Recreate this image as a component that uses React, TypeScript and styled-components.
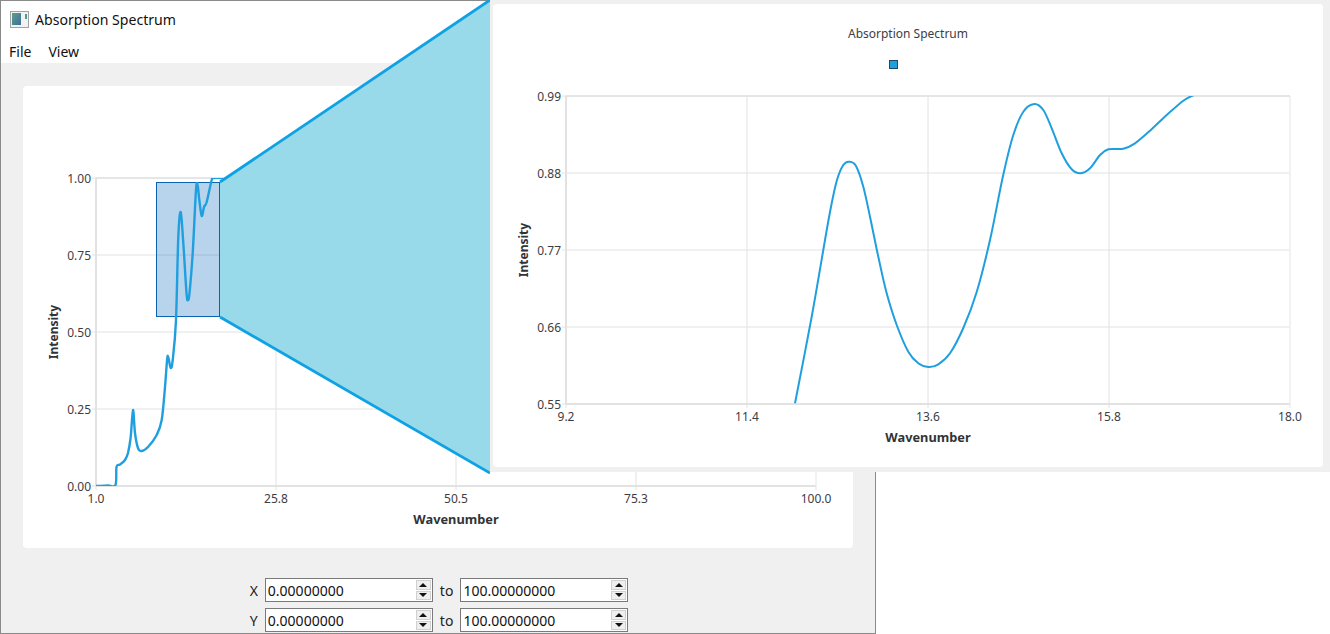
import React from 'react';
import styled, { createGlobalStyle } from 'styled-components';

const GlobalStyle = createGlobalStyle`
    html, body { margin: 0; padding: 0; background: #fff; overflow: hidden; }
    body { font-family: "Noto Sans", "Open Sans", sans-serif; }
`;

const Page = styled.div`
    position: relative;
    width: 1330px;
    height: 634px;
    overflow: hidden;
`;

const Win = styled.div`
    box-sizing: border-box;
    width: 876px;
    height: 634px;
    display: flex;
    flex-direction: column;
    border: 1px solid #8a8a8a;
    background: #f0f0f0;
`;

const TitleBar = styled.div`
    height: 36px;
    display: flex;
    align-items: center;
    gap: 6px;
    padding: 0 0 0 9px;
    background: #fff;
    font-size: 14.1px;
    color: #111;
`;

const MenuBar = styled.div`
    height: 26px;
    display: flex;
    gap: 17px;
    padding-left: 8px;
    background: #fff;
    font-size: 14px;
    line-height: 30px;
    color: #111;
`;

const Body = styled.div`
    flex: 1;
    display: flex;
    flex-direction: column;
    padding: 23px 22px 0;
`;

const Card = styled.div<{ $w: number; $h: number }>`
    width: ${p => p.$w}px;
    height: ${p => p.$h}px;
    flex: none;
    background: #fff;
    border-radius: 4px;

    svg { display: block; }
`;

const Controls = styled.div`
    margin-top: 30px;
    padding-left: 2px;
    display: grid;
    grid-template-columns: auto 168px auto 168px;
    grid-auto-rows: 24px;
    row-gap: 6px;
    column-gap: 7px;
    justify-content: center;
    align-items: center;
    font-size: 14px;
    color: #222;
`;

const SpinBox = styled.div`
    box-sizing: border-box;
    height: 24px;
    display: flex;
    align-items: center;
    justify-content: space-between;
    padding: 0 1px 0 2px;
    background: #fff;
    border: 1px solid #7a7a7a;
    font-size: 14px;
    color: #111;
`;

const SpinButtons = styled.div`
    width: 15px;
    height: 20px;
    display: flex;
    flex-direction: column;
    gap: 1px;
`;

const SpinButton = styled.div<{ $down?: boolean }>`
    flex: 1;
    display: flex;
    align-items: center;
    justify-content: center;
    background: #efefef;
    border: 1px solid #d0d0d0;

    &::before {
        content: '';
        border-left: 4px solid transparent;
        border-right: 4px solid transparent;
        ${p => p.$down ? 'border-top: 4px solid #111;' : 'border-bottom: 4px solid #111;'}
    }
`;

const ZoomWindow = styled.div`
    position: absolute;
    left: 490px;
    top: 0;
    width: 840px;
    height: 472px;
    box-sizing: border-box;
    padding: 4px 7px 5px 3px;
    background: #f0f0f0;
`;

const ZoomBand = styled.svg`
    position: absolute;
    left: 0;
    top: 0;
`;

type Pt = [number, number];

// catmull-rom through the points, so the curve stays smooth
const smooth = (pts: Pt[]) => {
    let d = `M${pts[0][0]} ${pts[0][1]}`;
    for (let i = 0; i < pts.length - 1; i++) {
        const p0 = pts[Math.max(i - 1, 0)];
        const p1 = pts[i];
        const p2 = pts[i + 1];
        const p3 = pts[Math.min(i + 2, pts.length - 1)];
        const c1x = p1[0] + (p2[0] - p0[0]) / 6;
        const c1y = p1[1] + (p2[1] - p0[1]) / 6;
        const c2x = p2[0] - (p3[0] - p1[0]) / 6;
        const c2y = p2[1] - (p3[1] - p1[1]) / 6;
        d += ` C${c1x.toFixed(1)} ${c1y.toFixed(1)} ${c2x.toFixed(1)} ${c2y.toFixed(1)} ${p2[0]} ${p2[1]}`;
    }
    return d;
};

const mainCurve: Pt[] = [
    [96, 486], [108, 485.5], [115.5, 485], [116.5, 467], [120, 464.5], [125, 460], [128, 453], [130.7, 437],
    [133, 410], [135, 433], [138, 448], [141.7, 451], [148, 447], [156.7, 435], [161.7, 420], [165, 387],
    [167.3, 358], [168.7, 359], [170.7, 368], [172.7, 360], [176, 320], [178.3, 237], [180.7, 212], [183.3, 243],
    [186.5, 293], [188, 300], [189.5, 293], [192.7, 253], [196, 190], [197.7, 186], [199.3, 200], [201.7, 216], [204, 207],
    [206.7, 202], [211.7, 180], [214, 178], [224, 178],
];

const zoomCurve: Pt[] = [
    [795, 403.3], [811.7, 316.7], [823.3, 250], [830, 212], [836.7, 181], [843.3, 165], [849.3, 161.7],
    [856, 166], [863.3, 186.7], [870, 216.7], [878.3, 256.7], [886.7, 293.3], [896.7, 325], [908.3, 351.7],
    [918.3, 363.3], [928.3, 367], [938.3, 364.3], [950, 353.3], [963.3, 328], [976.7, 292],
    [990, 240], [1003, 176], [1013.3, 135], [1023.3, 111.7], [1034.3, 104], [1043.3, 110], [1051.7, 128.3],
    [1061.7, 153.3], [1071.7, 169.3], [1080.7, 173.3], [1090, 168.3], [1100, 155], [1108.3, 149.3], [1123.3, 148.7],
    [1135, 143.3], [1150, 130.7], [1166.7, 115], [1183.3, 100.7], [1193.3, 95.3],
];

const TICK = '#e2e2e2';
const LABEL = '#3d3d46';
const LINE = '#209fdf';

interface ChartProps {
    box: [number, number, number, number];
    plot: { left: number; right: number; top: number; bottom: number };
    xTicks: [number, string][];
    yTicks: [number, string][];
    curve: Pt[];
    lineWidth: number;
    clipId: string;
    xTitle: [number, number];
    yTitle: [number, number];
    children?: React.ReactNode;
}

const Chart: React.FC<ChartProps> = ({ box, plot, xTicks, yTicks, curve, lineWidth, clipId, xTitle, yTitle, children }) => {
    const { left, right, top, bottom } = plot;
    return (
        <svg width={box[2]} height={box[3]} viewBox={box.join(' ')} fontFamily='"Noto Sans", sans-serif'>
            <clipPath id={clipId}>
                <rect x={left} y={top} width={right - left} height={bottom - top} />
            </clipPath>
            {xTicks.map(([x, t], i) => (
                <g key={t}>
                    {i > 0 && i < xTicks.length - 1 && <line x1={x} x2={x} y1={top} y2={bottom + 4} stroke={TICK} />}
                    {(i === 0 || i === xTicks.length - 1) && <line x1={x} x2={x} y1={bottom} y2={bottom + 4} stroke={TICK} />}
                    <text x={x} y={bottom + 17} textAnchor="middle" fontSize="12" fill={LABEL}>{t}</text>
                </g>
            ))}
            {yTicks.map(([y, t]) => (
                <g key={t}>
                    <line x1={left - 4} x2={right} y1={y} y2={y} stroke={TICK} />
                    <text x={left - 5} y={y + 5} textAnchor="end" fontSize="12" fill={LABEL}>{t}</text>
                </g>
            ))}
            <line x1={left} x2={left} y1={top} y2={bottom} stroke={TICK} strokeWidth="2" />
            <line x1={left} x2={right} y1={bottom} y2={bottom} stroke={TICK} strokeWidth="2" />
            <line x1={right} x2={right} y1={top} y2={bottom} stroke="#eeeeee" strokeWidth="1.5" />
            <line x1={left} x2={right} y1={top} y2={top} stroke={TICK} strokeWidth="1.5" />
            {children}
            <path d={smooth(curve)} fill="none" stroke={LINE} strokeWidth={lineWidth} clipPath={`url(#${clipId})`} />
            <text x={xTitle[0]} y={xTitle[1]} textAnchor="middle" fontSize="12.8" fontWeight="700" fill="#333">Wavenumber</text>
            <text
                x={yTitle[0]}
                y={yTitle[1]}
                textAnchor="middle"
                fontSize="12"
                fontWeight="700"
                fill="#333"
                transform={`rotate(-90 ${yTitle[0]} ${yTitle[1]})`}
            >
                Intensity
            </text>
        </svg>
    );
};

const WindowIcon = () => (
    <svg width="19" height="17" viewBox="0 0 19 17">
        <defs>
            <linearGradient id="icon-fill" x1="0" y1="0" x2="1" y2="1">
                <stop offset="0" stopColor="#5f9f8c" />
                <stop offset="1" stopColor="#3a6f9c" />
            </linearGradient>
        </defs>
        <rect x="0.5" y="0.5" width="18" height="16" fill="#f2f2f2" stroke="#a2a2a2" />
        <rect x="2" y="2" width="9" height="12" fill="url(#icon-fill)" />
        <rect x="15" y="3" width="2" height="5" fill="#4f9a97" />
    </svg>
);

const Spin: React.FC<{ value: string }> = ({ value }) => (
    <SpinBox>
        <span>{value}</span>
        <SpinButtons>
            <SpinButton />
            <SpinButton $down />
        </SpinButtons>
    </SpinBox>
);

const App: React.FC = () => (
    <Page>
        <GlobalStyle />
        <Win>
            <TitleBar>
                <WindowIcon />
                Absorption Spectrum
            </TitleBar>
            <MenuBar>
                <span>File</span>
                <span>View</span>
            </MenuBar>
            <Body>
                <Card $w={830} $h={462}>
                    <Chart
                        box={[23, 86, 830, 462]}
                        plot={{ left: 96, right: 816, top: 178, bottom: 486 }}
                        xTicks={[[96, '1.0'], [276, '25.8'], [456, '50.5'], [636, '75.3'], [816, '100.0']]}
                        yTicks={[[178, '1.00'], [255, '0.75'], [332, '0.50'], [409, '0.25'], [486, '0.00']]}
                        curve={mainCurve}
                        lineWidth={2.4}
                        clipId="main-plot"
                        xTitle={[456, 524]}
                        yTitle={[58, 332]}
                    >
                        <rect x="156.5" y="182.5" width="63" height="134" fill="rgba(0,100,190,0.28)" stroke="#0a62b0" />
                    </Chart>
                </Card>
                <Controls>
                    <span>X</span>
                    <Spin value="0.00000000" />
                    <span>to</span>
                    <Spin value="100.00000000" />
                    <span>Y</span>
                    <Spin value="0.00000000" />
                    <span>to</span>
                    <Spin value="100.00000000" />
                </Controls>
            </Body>
        </Win>
        <ZoomBand width="490" height="480" viewBox="0 0 490 480">
            <polygon points="220,182 490,0 490,473 220,317" fill="#98d9ea" />
            <line x1="220" y1="182" x2="490" y2="0" stroke="#0ea2e4" strokeWidth="2.8" />
            <line x1="220" y1="317" x2="490" y2="473" stroke="#0ea2e4" strokeWidth="2.8" />
        </ZoomBand>
        <ZoomWindow>
            <Card $w={830} $h={463}>
                <Chart
                    box={[493, 4, 830, 463]}
                    plot={{ left: 566, right: 1290, top: 96, bottom: 404 }}
                    xTicks={[[566, '9.2'], [747, '11.4'], [928, '13.6'], [1109, '15.8'], [1290, '18.0']]}
                    yTicks={[[96, '0.99'], [173, '0.88'], [250, '0.77'], [327, '0.66'], [404, '0.55']]}
                    curve={zoomCurve}
                    lineWidth={2}
                    clipId="zoom-plot"
                    xTitle={[928, 442]}
                    yTitle={[528, 250]}
                >
                    <text x="908" y="38" textAnchor="middle" fontSize="12" fill={LABEL}>Absorption Spectrum</text>
                    <rect x="889.5" y="60.5" width="8" height="8" fill="#209fdf" stroke="#1d4a66" />
                </Chart>
            </Card>
        </ZoomWindow>
    </Page>
);

export default App;
